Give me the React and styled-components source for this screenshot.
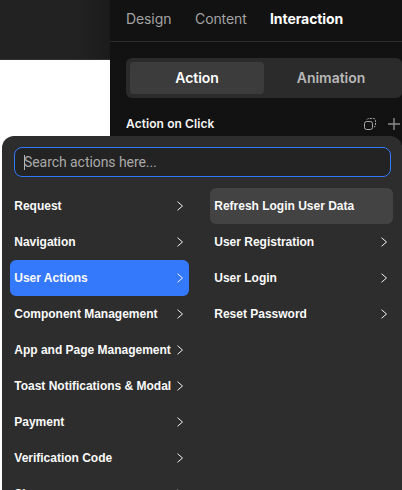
import React from "react";
import styled, { createGlobalStyle } from "styled-components";

const Global = createGlobalStyle`
  * { box-sizing: border-box; }
  html, body { margin: 0; overflow: hidden; background: #fff; }
`;
const Screen = styled.main`
  position: relative;
  width: 402px;
  height: 490px;
  overflow: hidden;
  display: grid;
  grid-template-columns: 110px 292px;
  background: #fff;
  font-family: "Inter", "Liberation Sans", sans-serif;
`;
const Canvas = styled.div`
  height: 60px;
  background: linear-gradient(90deg, #222 0, #222 70%, #1b1b1b 100%);
  border-bottom: 1px solid #303030;
`;
const Inspector = styled.aside`
  height: 160px;
  background: #121212;
`;
const Tabs = styled.nav`
  height: 42px;
  display: flex;
  align-items: center;
  gap: 24px;
  padding: 0 0 3px 16px;
  border-bottom: 1px solid #2b2b2b;
`;
const Tab = styled.span`
  flex: none;
  width: ${(p) => p.$width}px;
  white-space: nowrap;
  font-size: 14px;
  line-height: 18px;
  font-weight: ${(p) => (p.$active ? 700 : 400)};
  letter-spacing: ${(p) => (p.$active ? -0.08 : -0.1)}px;
  color: ${(p) => (p.$active ? "#fff" : "#a3a3a3")};
`;
const Segments = styled.div`
  display: grid;
  grid-template-columns: 1fr 1fr;
  width: 276px;
  height: 40px;
  margin: 16px 0 0 16px;
  padding: 4px;
  border-radius: 6px;
  background: #2b2b2b;
`;
const Segment = styled.div`
  display: flex;
  align-items: center;
  justify-content: center;
  border-radius: 4px;
  font-size: 14px;
  line-height: 18px;
  font-weight: 600;
  letter-spacing: -0.05px;
  background: ${(p) => (p.$active ? "#3c3c3c" : "transparent")};
  color: ${(p) => (p.$active ? "#fff" : "#b8b8b8")};
`;
const Heading = styled.div`
  display: flex;
  align-items: center;
  gap: 12px;
  height: 52px;
  padding: 0 2px 0 16px;
`;
const HeadingText = styled.span`
  flex: 1;
  font-size: 12px;
  line-height: 16px;
  font-weight: 600;
  letter-spacing: 0.08px;
  color: #f4f4f4;
`;
const Icon = styled.svg`
  flex: none;
  display: block;
  fill: none;
  stroke: ${(p) => p.$color || "#f0f0f0"};
`;
const Menu = styled.section`
  position: absolute;
  left: 2px;
  top: 136px;
  width: 400px;
  height: 380px;
  padding: 11px 8px 0;
  border-radius: 12px;
  background: #2d2d2d;
`;
const Search = styled.div`
  display: flex;
  align-items: center;
  width: 377px;
  height: 30px;
  margin-left: 4px;
  padding-left: 8px;
  border: 1px solid #3478fc;
  border-radius: 8px;
  background: #232323;
  font-family: Roboto, "Liberation Sans", sans-serif;
  font-size: 14px;
  letter-spacing: -0.06px;
  color: #a9a9a9;
`;
const Caret = styled.i`
  width: 1px;
  height: 15px;
  margin: 1px -1px 0 1px;
  background: #b5b5b5;
`;
const Columns = styled.div`
  display: grid;
  grid-template-columns: 179px 183px;
  column-gap: 21px;
  margin-top: 11px;
  align-items: start;
`;
const Item = styled.div`
  display: flex;
  align-items: center;
  justify-content: space-between;
  height: 36px;
  padding: 0 5px 0 4.3px;
  border-radius: 6px;
  background: ${(p) => p.$fill || "transparent"};
  font: 700 12px/16px "Liberation Sans", Arial, sans-serif;
  letter-spacing: -0.01px;
  white-space: nowrap;
  color: #fafafa;
`;

const Chevron = () => (
  <Icon width="8" height="12" viewBox="0 0 8 12">
    <path d="M1.5 1.7 6.5 6 1.5 10.3" />
  </Icon>
);
const actions = [
  "Request",
  "Navigation",
  "User Actions",
  "Component Management",
  "App and Page Management",
  "Toast Notifications & Modal",
  "Payment",
  "Verification Code",
  "Share",
];
const userActions = [
  "Refresh Login User Data",
  "User Registration",
  "User Login",
  "Reset Password",
];

export default function App() {
  return (
    <Screen>
      <Global />
      <Canvas />
      <Inspector>
        <Tabs>
          <Tab $width={45}>Design</Tab>
          <Tab $width={51}>Content</Tab>
          <Tab $width={74} $active>Interaction</Tab>
        </Tabs>
        <Segments>
          <Segment $active>Action</Segment>
          <Segment>Animation</Segment>
        </Segments>
        <Heading>
          <HeadingText>Action on Click</HeadingText>
          <Icon width="12" height="12" viewBox="0 0 12 12" $color="#aaa">
            <rect x=".5" y="3.5" width="8" height="8" rx="2.2" />
            <path d="M3 1.5Q3.5.5 5 .5h4.5q2 0 2 2V7.5q0 1-1.5 1.5" strokeDasharray="2 1" />
          </Icon>
          <Icon width="12" height="12" viewBox="0 0 12 12" $color="#8c8c8c">
            <path d="M6 0v12M0 6h12" strokeWidth="1.4" />
          </Icon>
        </Heading>
      </Inspector>
      <Menu>
        <Search><Caret />Search actions here...</Search>
        <Columns>
          <div>
            {actions.map((name) => (
              <Item key={name} $fill={name === "User Actions" ? "#3478fc" : undefined}>
                {name}<Chevron />
              </Item>
            ))}
          </div>
          <div>
            {userActions.map((name, i) => (
              <Item key={name} $fill={i === 0 ? "#434343" : undefined}>
                {name}{i > 0 && <Chevron />}
              </Item>
            ))}
          </div>
        </Columns>
      </Menu>
    </Screen>
  );
}
